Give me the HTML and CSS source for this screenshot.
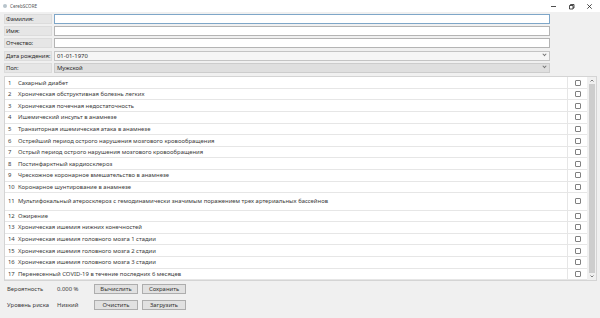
FILE: index.html
```html
<!DOCTYPE html>
<html>
<head>
  <meta charset="UTF-8" />
  <title>CerebSCORE</title>
  <link rel="stylesheet" href="styles.css">
</head>
<body>
  <header class="titlebar">
    <span class="app-icon"></span>
    <span class="app-title">CerebSCORE</span>
    <div class="win-controls">
      <svg width="7" height="7" viewBox="0 0 7 7"><path d="M1 3.5h5" stroke="#222" stroke-width="0.8"/></svg>
      <svg width="7" height="7" viewBox="0 0 7 7"><path d="M1.5 2.5h3.5v3.5h-3.5z M2.5 2.5v-1h3.5v3.5h-1" fill="none" stroke="#222" stroke-width="0.8"/></svg>
      <svg width="7" height="7" viewBox="0 0 7 7"><path d="M1.3 1.3l4.4 4.4 M5.7 1.3l-4.4 4.4" stroke="#222" stroke-width="0.8"/></svg>
    </div>
  </header>

  <form class="patient">
    <label class="field-label">Фамилия:</label>
    <div class="input focused"></div>
    <label class="field-label">Имя:</label>
    <div class="input"></div>
    <label class="field-label">Отчество:</label>
    <div class="input"></div>
    <label class="field-label">Дата рождения:</label>
    <div class="input combo">01-01-1970<span class="chevron"></span></div>
    <label class="field-label">Пол:</label>
    <div class="input combo gray">Мужской<span class="chevron"></span></div>
  </form>

  <section class="factors">
    <div class="rows">
      <div class="row"><span class="num">1</span><span class="text">Сахарный диабет</span><span class="check"><i></i></span></div>
      <div class="row"><span class="num">2</span><span class="text">Хроническая обструктивная болезнь легких</span><span class="check"><i></i></span></div>
      <div class="row"><span class="num">3</span><span class="text">Хроническая почечная недостаточность</span><span class="check"><i></i></span></div>
      <div class="row"><span class="num">4</span><span class="text">Ишемический инсульт в анамнезе</span><span class="check"><i></i></span></div>
      <div class="row"><span class="num">5</span><span class="text">Транзиторная ишемическая атака в анамнезе</span><span class="check"><i></i></span></div>
      <div class="row"><span class="num">6</span><span class="text">Острейший период острого нарушения мозгового кровообращения</span><span class="check"><i></i></span></div>
      <div class="row"><span class="num">7</span><span class="text">Острый период острого нарушения мозгового кровообращения</span><span class="check"><i></i></span></div>
      <div class="row"><span class="num">8</span><span class="text">Постинфарктный кардиосклероз</span><span class="check"><i></i></span></div>
      <div class="row"><span class="num">9</span><span class="text">Чрескожное коронарное вмешательство в анамнезе</span><span class="check"><i></i></span></div>
      <div class="row"><span class="num">10</span><span class="text">Коронарное шунтирование в анамнезе</span><span class="check"><i></i></span></div>
      <div class="row tall"><span class="num">11</span><span class="text">Мультифокальный атеросклероз с гемодинамически значимым поражением трех артериальных бассейнов</span><span class="check"><i></i></span></div>
      <div class="row"><span class="num">12</span><span class="text">Ожирение</span><span class="check"><i></i></span></div>
      <div class="row"><span class="num">13</span><span class="text">Хроническая ишемия нижних конечностей</span><span class="check"><i></i></span></div>
      <div class="row"><span class="num">14</span><span class="text">Хроническая ишемия головного мозга 1 стадии</span><span class="check"><i></i></span></div>
      <div class="row"><span class="num">15</span><span class="text">Хроническая ишемия головного мозга 2 стадии</span><span class="check"><i></i></span></div>
      <div class="row"><span class="num">16</span><span class="text">Хроническая ишемия головного мозга 3 стадии</span><span class="check"><i></i></span></div>
      <div class="row"><span class="num">17</span><span class="text">Перенесенный COVID-19 в течение последних 6 месяцев</span><span class="check"><i></i></span></div>
    </div>
    <div class="scrollbar">
      <svg width="8" height="7" viewBox="0 0 8 7"><path d="M2.5 4.5l1.5-1.5 1.5 1.5" fill="none" stroke="#606060" stroke-width="0.8"/></svg>
      <div class="thumb"></div>
      <svg width="8" height="7" viewBox="0 0 8 7"><path d="M2.5 2.5l1.5 1.5 1.5-1.5" fill="none" stroke="#606060" stroke-width="0.8"/></svg>
    </div>
  </section>

  <footer class="result">
    <span>Вероятность</span>
    <span>0.000 %</span>
    <button>Вычислить</button>
    <button class="second">Сохранить</button>
    <span>Уровень риска</span>
    <span>Низкий</span>
    <button>Очистить</button>
    <button class="second">Загрузить</button>
  </footer>
</body>
</html>
```

FILE: styles.css
```css
body {
  margin: 0;
  width: 600px;
  height: 318px;
  overflow: hidden;
  background: #f0f0f0;
  font-family: "Noto Sans", sans-serif;
  font-size: 5.9px;
  color: #3a3a3a;
}

/* title bar */
.titlebar {
  height: 12px;
  background: #fff;
  display: flex;
  align-items: center;
  padding-left: 3px;
}
.app-icon {
  width: 4px;
  height: 4px;
  border-radius: 50%;
  background: #b8c4cc;
  margin-right: 3px;
}
.app-title {
  font-size: 4.6px;
  color: #555;
}
.win-controls {
  margin-left: auto;
  display: flex;
  gap: 11px;
  margin-right: 7px;
}

/* patient form */
form.patient {
  display: grid;
  grid-template-columns: 48px 1fr;
  grid-auto-rows: 10px;
  column-gap: 2px;
  row-gap: 2.2px;
  padding: 2px 50px 0 4px;
}
.field-label {
  background: #e6e6e6;
  border: 1px solid #dcdcdc;
  display: flex;
  align-items: center;
  padding-left: 1px;
  white-space: nowrap;
  letter-spacing: -0.1px;
  color: #2e2e2e;
}
.input {
  background: #fff;
  border: 1px solid #b4b4b4;
  display: flex;
  align-items: center;
  padding-left: 2px;
  color: #2a2a2a;
}
.input.focused {
  border-color: #7ea6c8;
}
.input.combo {
  background: #f6f6f6;
  border-color: #c4c4c4;
}
.input.combo.gray {
  background: #dfdfdf;
  border-color: #cccccc;
}
.chevron {
  margin-left: auto;
  margin-right: 3px;
  width: 2px;
  height: 2px;
  border-right: 0.7px solid #777;
  border-bottom: 0.7px solid #777;
  transform: rotate(45deg) translate(-1px, -1px);
}

/* risk factor list */
section.factors {
  margin: 3.5px 3px 0 4px;
  height: 203px;
  border: 1px solid #d4d4d4;
  background: #fff;
  display: flex;
}
.rows {
  flex: 1;
}
.row {
  height: 11.6px;
  box-sizing: border-box;
  border-bottom: 1px solid #e6e6e6;
  display: flex;
  align-items: center;
}
.row.tall {
  height: 17.4px;
}
.row .num {
  width: 10px;
  padding-left: 3px;
}
.row .text {
  flex: 1;
  white-space: nowrap;
}
.row .check {
  width: 19px;
  height: 100%;
  border-left: 1px solid #e6e6e6;
  display: flex;
  align-items: center;
  justify-content: center;
}
.row .check i {
  width: 4px;
  height: 4px;
  border: 0.8px solid #808080;
  border-radius: 1px;
  background: #fff;
}
.scrollbar {
  width: 9px;
  background: #f0f0f0;
  display: flex;
  flex-direction: column;
  align-items: center;
}
.scrollbar .thumb {
  flex: 1;
  width: 6px;
  background: #cdcdcd;
}

/* result bar */
footer.result {
  display: grid;
  grid-template-columns: 50px 37px 44px 48px;
  grid-auto-rows: 10px;
  row-gap: 6px;
  margin: 3px 0 0 7px;
  align-items: center;
}
footer.result button {
  width: 44px;
  height: 10px;
  margin: 0;
  padding: 0;
  font: inherit;
  color: #333;
  background: #e1e1e1;
  border: 1px solid #adadad;
}
footer.result button.second {
  justify-self: end;
}
```
